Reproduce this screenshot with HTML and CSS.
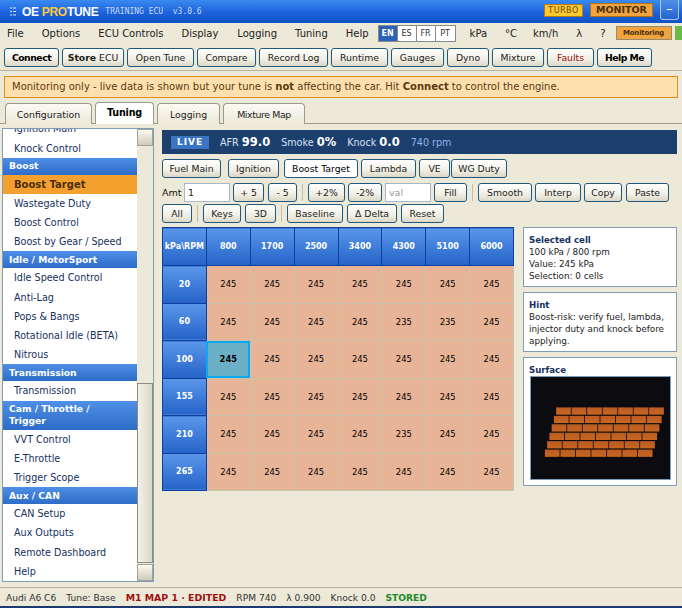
FILE: index.html
```html
<!DOCTYPE html>
<html lang="en">
<head>
    <meta charset="UTF-8">
    <meta name="viewport" content="width=device-width, initial-scale=1.0">
    <title>OE Protune</title>
    <link rel="stylesheet" href="styles.css">
</head>
<body>
    <!-- Title bar -->
    <div class="titlebar">
        <svg class="app-icon" width="6" height="9" viewBox="0 0 6 9">
            <path d="M0 1h2M3 1h3M0 4.500h2M3 4.500h3M0 8h2M3 8h3" stroke="#dfe9fa" stroke-width="1.2"/>
        </svg>
        <div class="app-name">OE <span class="app-name-pro">PRO</span>TUNE</div>
        <div class="app-sub">TRAINING ECU &nbsp;v3.0.6</div>
        <div class="title-right">
            <div class="badge-turbo">TURBO</div>
            <div class="badge-monitor">MONITOR</div>
            <div class="min-btn">&ndash;</div>
        </div>
    </div>

    <!-- Menu bar -->
    <div class="menubar">
        <span class="menu-item m-file">File</span>
        <span class="menu-item m-options">Options</span>
        <span class="menu-item m-ecu">ECU Controls</span>
        <span class="menu-item m-display">Display</span>
        <span class="menu-item m-logging">Logging</span>
        <span class="menu-item m-tuning">Tuning</span>
        <span class="menu-item m-help">Help</span>
        <div class="lang-group">
            <span class="lang lang-on">EN</span>
            <span class="lang">ES</span>
            <span class="lang">FR</span>
            <span class="lang">PT</span>
        </div>
        <span class="menu-item m-kpa">kPa</span>
        <span class="menu-item m-deg">°C</span>
        <span class="menu-item m-kmh">km/h</span>
        <span class="menu-item m-lambda">λ</span>
        <span class="menu-item m-q">?</span>
        <div class="mode-pill">Monitoring</div>
        <div class="mode-green"></div>
    </div>

    <!-- Toolbar -->
    <div class="toolbar">
        <button class="btn btn-strong w-connect">Connect</button>
        <button class="btn w-store"><b>Store</b> ECU</button>
        <button class="btn w-open">Open Tune</button>
        <button class="btn w-compare">Compare</button>
        <button class="btn w-record">Record Log</button>
        <button class="btn w-runtime">Runtime</button>
        <button class="btn w-gauges">Gauges</button>
        <button class="btn w-dyno">Dyno</button>
        <button class="btn w-mixture">Mixture</button>
        <button class="btn btn-fault w-faults">Faults</button>
        <button class="btn btn-strong w-help">Help Me</button>
    </div>

    <div class="notice">Monitoring only - live data is shown but your tune is <b>not</b> affecting the car. Hit <b>Connect</b> to control the engine.</div>

    <!-- Tabs -->
    <div class="tabs">
        <div class="tab t-config">Configuration</div>
        <div class="tab tab-on t-tuning">Tuning</div>
        <div class="tab t-logging">Logging</div>
        <div class="tab t-mixture">Mixture Map</div>
    </div>

    <div class="workspace">
        <!-- Side list -->
        <div class="sidebar">
            <div class="side-list">
                <div class="side-item side-clipped">Ignition Main</div>
                <div class="side-item">Knock Control</div>
                <div class="side-group">Boost</div>
                <div class="side-item side-on">Boost Target</div>
                <div class="side-item">Wastegate Duty</div>
                <div class="side-item">Boost Control</div>
                <div class="side-item">Boost by Gear / Speed</div>
                <div class="side-group">Idle / MotorSport</div>
                <div class="side-item">Idle Speed Control</div>
                <div class="side-item">Anti-Lag</div>
                <div class="side-item">Pops &amp; Bangs</div>
                <div class="side-item">Rotational Idle (BETA)</div>
                <div class="side-item">Nitrous</div>
                <div class="side-group">Transmission</div>
                <div class="side-item">Transmission</div>
                <div class="side-group">Cam / Throttle /<br>Trigger</div>
                <div class="side-item">VVT Control</div>
                <div class="side-item">E-Throttle</div>
                <div class="side-item">Trigger Scope</div>
                <div class="side-group">Aux / CAN</div>
                <div class="side-item">CAN Setup</div>
                <div class="side-item">Aux Outputs</div>
                <div class="side-item">Remote Dashboard</div>
                <div class="side-item">Help</div>
            </div>
            <div class="scrollbar">
                <div class="scroll-btn"></div>
                <div class="scroll-track"></div>
                <div class="scroll-thumb"></div>
                <div class="scroll-btn"></div>
            </div>
        </div>

        <div class="content">
            <div class="live-strip">
                <span class="live-badge">LIVE</span>
                <span class="live-stat">AFR <b>99.0</b></span>
                <span class="live-stat">Smoke <b>0%</b></span>
                <span class="live-stat">Knock <b>0.0</b></span>
                <span class="live-rpm">740 rpm</span>
            </div>

            <div class="map-tabs">
                <button class="btn w-fuel">Fuel Main</button>
                <button class="btn w-ign">Ignition</button>
                <button class="btn btn-on w-boost">Boost Target</button>
                <button class="btn w-lambda">Lambda</button>
                <button class="btn w-ve">VE</button>
                <button class="btn w-wg">WG Duty</button>
            </div>

            <div class="tool-row">
                <span class="amt-label">Amt</span>
                <input class="field field-amt" type="text" value="1">
                <button class="btn w-p5">+ 5</button>
                <button class="btn w-m5">- 5</button>
                <span class="tool-sep"></span>
                <button class="btn w-p2">+2%</button>
                <button class="btn w-m2">-2%</button>
                <input class="field field-val" type="text" placeholder="val">
                <button class="btn w-fill">Fill</button>
                <span class="tool-sep"></span>
                <button class="btn w-smooth">Smooth</button>
                <button class="btn w-interp">Interp</button>
                <button class="btn w-copy">Copy</button>
                <button class="btn w-paste">Paste</button>
            </div>

            <div class="tool-row tool-row-2">
                <button class="btn w-all">All</button>
                <span class="tool-sep"></span>
                <button class="btn w-keys">Keys</button>
                <button class="btn w-3d">3D</button>
                <span class="tool-sep"></span>
                <button class="btn w-base">Baseline</button>
                <button class="btn w-delta">Δ Delta</button>
                <button class="btn w-reset">Reset</button>
            </div>

            <div class="map-area">
                <table class="map-table">
                    <tr><th>kPa\RPM</th><th>800</th><th>1700</th><th>2500</th><th>3400</th><th>4300</th><th>5100</th><th>6000</th></tr>
                    <tr><th>20</th><td>245</td><td>245</td><td>245</td><td>245</td><td>245</td><td>245</td><td>245</td></tr>
                    <tr><th>60</th><td>245</td><td>245</td><td>245</td><td>245</td><td>235</td><td>235</td><td>245</td></tr>
                    <tr><th>100</th><td class="cell-on">245</td><td>245</td><td>245</td><td>245</td><td>245</td><td>245</td><td>245</td></tr>
                    <tr><th>155</th><td>245</td><td>245</td><td>245</td><td>245</td><td>245</td><td>245</td><td>245</td></tr>
                    <tr><th>210</th><td>245</td><td>245</td><td>245</td><td>245</td><td>235</td><td>245</td><td>245</td></tr>
                    <tr><th>265</th><td>245</td><td>245</td><td>245</td><td>245</td><td>245</td><td>245</td><td>245</td></tr>
                </table>

                <div class="info-col">
                    <div class="info-box box-cell">
                        <div class="info-title">Selected cell</div>
                        100 kPa / 800 rpm<br>
                        Value: 245 kPa<br>
                        Selection: 0 cells
                    </div>
                    <div class="info-box box-hint">
                        <div class="info-title">Hint</div>
                        Boost-risk: verify fuel, lambda, injector duty and knock before applying.
                    </div>
                    <div class="info-box box-surface">
                        <div class="info-title">Surface</div>
                        <svg class="surface" width="141" height="104" viewBox="0 0 141 104">
                            <defs>
                                <linearGradient id="brick" x1="0" y1="0" x2="0" y2="1">
                                    <stop offset="0" stop-color="#b95c22"/>
                                    <stop offset="1" stop-color="#c9661f"/>
                                </linearGradient>
                                <g id="brickrow" fill="url(#brick)">
                                    <rect x="0" width="15" height="7.4"/>
                                    <rect x="15.8" width="15" height="7.4"/>
                                    <rect x="31.6" width="15" height="7.4"/>
                                    <rect x="47.4" width="15" height="7.4"/>
                                    <rect x="63.2" width="15" height="7.4"/>
                                    <rect x="79" width="15" height="7.4"/>
                                    <rect x="94.8" width="15" height="7.4"/>
                                </g>
                            </defs>
                            <use href="#brickrow" x="25.3" y="31"/>
                            <use href="#brickrow" x="23" y="39.6"/>
                            <use href="#brickrow" x="20.7" y="48.2"/>
                            <use href="#brickrow" x="18.4" y="56.8"/>
                            <use href="#brickrow" x="16.1" y="65.4"/>
                            <use href="#brickrow" x="13.8" y="74"/>
                        </svg>
                    </div>
                </div>
            </div>
        </div>
    </div>

    <!-- Status bar -->
    <div class="statusbar">
        <span>Audi A6 C6</span>
        <span>Tune: Base</span>
        <b class="status-red">M1 MAP 1 · EDITED</b>
        <span>RPM 740</span>
        <span>λ 0.900</span>
        <span>Knock 0.0</span>
        <b class="status-green">STORED</b>
    </div>
</body>
</html>
```

FILE: styles.css
```css
* {
    box-sizing: border-box;
}

html, body {
    height: 100%;
}

body {
    margin: 0;
    width: 682px;
    height: 608px;
    overflow: hidden;
    display: flex;
    flex-direction: column;
    font-family: "DejaVu Sans", sans-serif;
    font-size: 10px;
    color: #111;
    background-color: #ece9d8;
}

/* Title bar */
.titlebar {
    height: 23px;
    flex: none;
    display: flex;
    align-items: center;
    padding-left: 10px;
    background: linear-gradient(#3a8af0, #1c62dc 55%, #0f52c4);
    color: #fff;
}

.app-icon {
    margin-right: 6px;
}

.app-name {
    font-family: "Liberation Sans", sans-serif;
    font-size: 12px;
    font-weight: bold;
    letter-spacing: -0.3px;
}

.app-name-pro {
    color: #ffc83a;
}

.app-sub {
    margin-left: 7px;
    font-family: "DejaVu Sans Mono", monospace;
    font-size: 8px;
    color: #c7dafa;
}

.title-right {
    margin-left: auto;
    display: flex;
    align-items: flex-start;
    align-self: flex-start;
    padding-right: 3px;
}

.badge-turbo {
    width: 39px;
    height: 13px;
    margin-top: 4px;
    background-color: #fcc830;
    border: 1px solid #b5791a;
    color: #6d4a10;
    font-size: 8px;
    line-height: 11px;
    letter-spacing: 0.5px;
    text-align: center;
}

.badge-monitor {
    width: 63px;
    height: 14px;
    margin: 3px 7px 0 7px;
    background-color: #f0a440;
    border: 1px solid #b5701a;
    color: #4b2e08;
    font-size: 9.500px;
    font-weight: bold;
    line-height: 12px;
    text-align: center;
}

.min-btn {
    width: 19px;
    height: 20px;
    background: linear-gradient(#4f8fe8, #2563cc);
    border: 1px solid #a9c5ee;
    border-top: none;
    border-radius: 0 0 3px 3px;
    font-size: 13px;
    line-height: 17px;
    text-align: center;
    color: #fff;
}

/* Menu bar */
.menubar {
    height: 20px;
    flex: none;
    display: flex;
    align-items: center;
    white-space: nowrap;
    font-size: 10px;
    color: #222;
}

.menu-item {
    flex: none;
}

.m-file { margin-left: 7px; }
.m-options { margin-left: 18px; }
.m-ecu { margin-left: 18px; }
.m-display { margin-left: 18px; }
.m-logging { margin-left: 19px; }
.m-tuning { margin-left: 18px; }
.m-help { margin-left: 18px; }
.m-kpa { margin-left: 14px; }
.m-deg { margin-left: 18px; }
.m-kmh { margin-left: 16px; }
.m-lambda { margin-left: 18px; }
.m-q { margin-left: 18px; }

.lang-group {
    flex: none;
    display: flex;
    height: 17px;
    margin-left: 9px;
    border: 1px solid #8a8a8a;
    background-color: #fff;
}

.lang {
    width: 19px;
    border-right: 1px solid #8a8a8a;
    font-size: 8px;
    line-height: 15px;
    text-align: center;
    color: #333;
}

.lang:last-child {
    border-right: none;
}

.lang-on {
    background-color: #2a62b8;
    color: #fff;
    font-weight: bold;
}

.mode-pill {
    flex: none;
    width: 56px;
    height: 14px;
    margin-left: 10px;
    background-color: #f0a440;
    border: 1px solid #9a8a6a;
    color: #4b2e08;
    font-size: 7px;
    font-weight: bold;
    letter-spacing: -0.2px;
    line-height: 12px;
    text-align: center;
}

.mode-green {
    flex: none;
    width: 20px;
    height: 14px;
    margin-left: 3px;
    background-color: #6cb84a;
}

/* Buttons */
.btn {
    flex: none;
    height: 19px;
    padding: 0;
    border: 1px solid #1f5a7e;
    border-radius: 3px;
    background: linear-gradient(#ffffff, #f1efe4 60%, #dcd8c8);
    font-family: "DejaVu Sans", sans-serif;
    font-size: 9.300px;
    color: #222;
    white-space: nowrap;
}

.btn-strong {
    color: #000;
    font-weight: bold;
    letter-spacing: -0.5px;
}

.btn-fault {
    color: #a01010;
}

.btn-on {
    background: #fff;
    color: #000;
}

.toolbar {
    height: 28px;
    flex: none;
    display: flex;
    align-items: flex-start;
    gap: 3px;
    padding: 5px 0 0 4px;
    border-bottom: 1px solid #b5b2a2;
}

.w-connect { width: 55px; }
.w-store { width: 62px; }
.w-open { width: 67px; }
.w-compare { width: 59px; }
.w-record { width: 69px; }
.w-runtime { width: 57px; }
.w-gauges { width: 53px; }
.w-dyno { width: 42px; }
.w-mixture { width: 52px; }
.w-faults { width: 47px; }
.w-help { width: 55px; }

.notice {
    height: 22px;
    flex: none;
    margin: 5px 4px 0 4px;
    padding-left: 7px;
    background-color: #fde0ae;
    border: 1px solid #e08a18;
    color: #5a3a10;
    font-size: 10px;
    line-height: 20px;
    white-space: nowrap;
}

/* Tabs */
.tabs {
    height: 22px;
    flex: none;
    display: flex;
    align-items: flex-end;
    margin-top: 4px;
    padding-left: 5px;
    border-bottom: 1px solid #9a9a90;
}

.tab {
    height: 21px;
    margin-right: 3px;
    margin-bottom: -1px;
    border: 1px solid #9a9a90;
    border-bottom: none;
    border-radius: 4px 4px 0 0;
    background: linear-gradient(#fbfaf4, #ece9d8);
    font-size: 9.400px;
    line-height: 21px;
    text-align: center;
    color: #222;
}

.tab-on {
    height: 22px;
    background: #fff;
    color: #000;
    font-size: 9.600px;
    font-weight: bold;
    letter-spacing: -0.2px;
    line-height: 19px;
}

.t-config { width: 87px; }
.t-tuning { width: 59px; }
.t-logging { width: 63px; }
.t-mixture { width: 82px; letter-spacing: -0.4px; }

/* Work area */
.workspace {
    flex: 1;
    min-height: 0;
    display: flex;
    align-items: flex-start;
    padding: 4px 0 0 2px;
}

.sidebar {
    width: 152px;
    height: 454px;
    flex: none;
    display: flex;
    background-color: #fff;
    border: 1px solid #7f9db9;
}

.side-list {
    flex: 1;
    min-width: 0;
}

.side-item {
    height: 19.200px;
    padding-left: 11px;
    font-size: 9.600px;
    line-height: 19px;
    color: #16305e;
    white-space: nowrap;
}

.side-clipped {
    height: 9.500px;
    line-height: 0;
    overflow: hidden;
}

.side-on {
    background-color: #f3a02e;
    color: #4b2e08;
    font-weight: bold;
    font-size: 10px;
}

.side-group {
    padding: 2.500px 6px;
    background: linear-gradient(#4f8fe6, #2d6cc8);
    color: #fff;
    font-size: 9.200px;
    font-weight: bold;
    line-height: 12px;
}

.scrollbar {
    width: 16px;
    flex: none;
    display: flex;
    flex-direction: column;
    background-color: #ece9d8;
}

.scroll-btn {
    height: 17px;
    flex: none;
    background: linear-gradient(#fbfaf4, #cfcbb8);
    border: 1px solid #a5a294;
}

.scroll-track {
    height: 237px;
    flex: none;
}

.scroll-thumb {
    height: 180px;
    flex: none;
    margin-bottom: 1px;
    background: linear-gradient(90deg, #f4f2e8, #dad7c6);
    border: 1px solid #8f8c7e;
}

.content {
    width: 515px;
    margin-left: 8px;
    padding-top: 2px;
    flex: none;
}

.live-strip {
    height: 24px;
    display: flex;
    align-items: center;
    padding-left: 9px;
    background-color: #1c3f6e;
    color: #d6e2f4;
    font-size: 9.600px;
}

.live-badge {
    width: 38px;
    height: 13px;
    margin-right: 11px;
    background-color: #3b74c2;
    color: #fff;
    font-size: 9px;
    font-weight: bold;
    letter-spacing: 1px;
    line-height: 13px;
    text-align: center;
}

.live-stat {
    margin-right: 11px;
}

.live-stat b {
    font-size: 11.500px;
    color: #fff;
}

.live-rpm {
    color: #8fb4e6;
}

.map-tabs {
    display: flex;
    gap: 3px;
    margin-top: 5px;
}

.w-fuel { width: 59px; }
.w-ign { width: 51px; margin-left: 4px; }
.w-boost { width: 74px; margin-left: 2px; }
.w-lambda { width: 55px; }
.w-ve { width: 31px; }
.w-wg { width: 56px; margin-left: -2px; }

.tool-row {
    display: flex;
    align-items: center;
    gap: 3px;
    margin-top: 5px;
}

.tool-row-2 {
    margin-top: 2px;
}

.amt-label {
    width: 19px;
    font-size: 9.500px;
}

.field {
    height: 19px;
    padding: 0 3px;
    border: 1px solid #a8b8c8;
    background-color: #fff;
    font-family: "DejaVu Sans", sans-serif;
    font-size: 9.500px;
    color: #222;
}

.field::placeholder {
    color: #999;
}

.field-amt { width: 46px; }
.field-val { width: 46px; }

.tool-sep {
    width: 1px;
    height: 17px;
    margin: 0 2px 0 2px;
    background-color: #c0bdaa;
}

.w-p5 { width: 31px; }
.w-m5 { width: 29px; margin-left: 1px; }
.w-p2 { width: 37px; }
.w-m2 { width: 34px; }
.w-fill { width: 33px; }
.w-smooth { width: 54px; }
.w-interp { width: 46px; }
.w-copy { width: 38px; }
.w-paste { width: 43px; margin-left: 1px; }
.w-all { width: 30px; }
.w-keys { width: 38px; }
.w-3d { width: 31px; margin-left: 1px; }
.w-base { width: 56px; }
.w-delta { width: 50px; margin-left: 1px; }
.w-reset { width: 43px; margin-left: 1px; }

/* Map table */
.map-area {
    display: flex;
    align-items: flex-start;
    margin-top: 4px;
}

.map-table {
    width: 352px;
    flex: none;
    table-layout: fixed;
    border-collapse: collapse;
}

.map-table th {
    height: 37.500px;
    padding: 0;
    border: 1px solid #0e3f9a;
    background: linear-gradient(#5a97ea, #2563c8);
    color: #fff;
    font-size: 8px;
    font-weight: bold;
    text-align: center;
}

.map-table tr:first-child th {
    height: 38px;
}

.map-table td {
    padding: 0;
    border: 1px solid #c8c4aa;
    background-color: #e8b497;
    color: #000;
    font-size: 8.400px;
    text-align: center;
}

.map-table td.cell-on {
    background-color: #6cb0c8;
    outline: 2px solid #0aa8f0;
    outline-offset: -2px;
    font-weight: bold;
}

/* Right info boxes */
.info-col {
    width: 154px;
    margin-left: 9px;
    flex: none;
    display: flex;
    flex-direction: column;
    gap: 5px;
}

.info-box {
    padding: 6px 2px 0 5px;
    background-color: #fff;
    border: 1px solid #7f9db9;
    font-size: 8.800px;
    line-height: 12px;
    color: #222;
}

.box-cell { height: 60px; }
.box-hint { height: 60px; }
.box-surface { height: 129px; }

.info-title {
    color: #16305e;
    font-size: 8.600px;
    font-weight: bold;
}

.surface {
    display: block;
    margin-left: 1px;
    background-color: #0b0b10;
    border: 1px solid #7f9db9;
}

/* Status bar */
.statusbar {
    height: 21px;
    flex: none;
    display: flex;
    align-items: center;
    gap: 10px;
    padding: 1px 0 0 6px;
    border-top: 1px solid #b5b2a2;
    border-bottom: 2px solid #1c3a6e;
    font-size: 9.100px;
    color: #333;
    white-space: nowrap;
}

.status-red {
    font-size: 9.400px;
    color: #a01010;
}

.status-green {
    color: #1f8a2c;
}
```
